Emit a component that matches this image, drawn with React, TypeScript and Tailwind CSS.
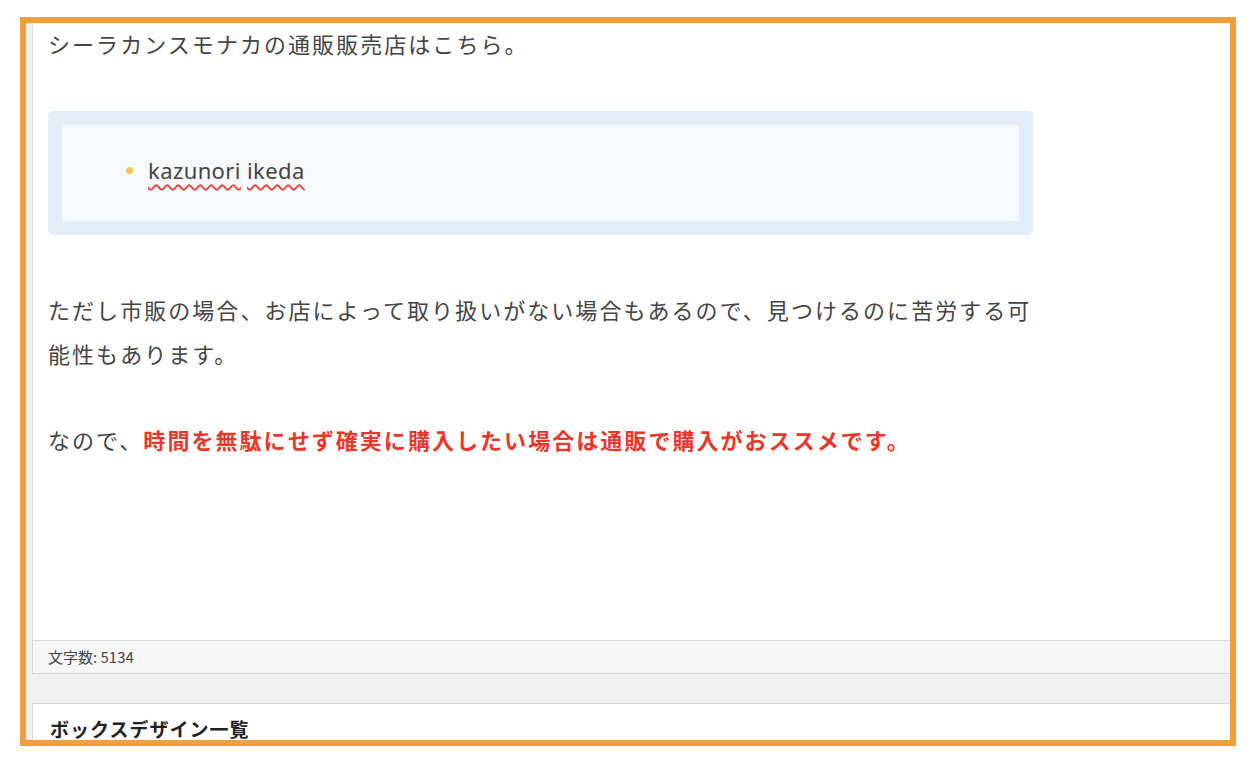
import React from "react";

const jp = "font-['Noto_Sans_CJK_JP','Noto_Sans',sans-serif]";

const App: React.FC = () => {
  return (
    <div className={`w-[1258px] h-[766px] bg-white pt-[17px] pl-[20px] ${jp}`}>
      <div className="w-[1216px] h-[729px] border-[6px] border-[#ef9f3c] bg-[#f1f1f1] pl-[6px] flex flex-col overflow-hidden">
        {/* editor area */}
        <div className="h-[617px] bg-white border-l border-[#dcdcdc] pl-[15px] shrink-0">
          <div className="w-[990px] text-[22px] tracking-[2.05px] leading-[44px] text-[#444]">
            <p className="-mt-[2px]">シーラカンスモナカの通販販売店はこちら。</p>

            <div className="mt-[46px] h-[124px] rounded-[5px] bg-[#e1eef8] p-[14px] w-[985px]">
              <div className="h-full bg-[#f6fafe] flex items-center pl-[64px] pb-[6px]">
                <span className="w-[7px] h-[7px] rounded-full bg-[#f3c74e] mr-[15px]" />
                <span className="font-['Noto_Sans',sans-serif] text-[22px] tracking-[0.4px] text-[#444]">
                  <span className="underline decoration-wavy decoration-[#e0443c] decoration-[1.5px] underline-offset-[5px]">kazunori</span>{" "}
                  <span className="underline decoration-wavy decoration-[#e0443c] decoration-[1.5px] underline-offset-[5px]">ikeda</span>
                </span>
              </div>
            </div>

            <p className="mt-[52px]">
              ただし市販の場合、お店によって取り扱いがない場合もあるので、見つけるのに苦労する可能性もあります。
            </p>

            <p className="mt-[42px]">
              なので、
              <strong className="font-bold text-[#e8372c]">
                時間を無駄にせず確実に購入したい場合は通販で購入がおススメです。
              </strong>
            </p>
          </div>
        </div>

        {/* status bar */}
        <div className="h-[34px] shrink-0 bg-[#f6f6f6] border border-[#d6d6d6] border-r-0 flex items-center pl-[15px] text-[15px] text-[#444]">
          文字数: 5134
        </div>

        <div className="h-[29px] shrink-0 bg-[#f0f0f0]" />

        {/* meta box */}
        <div className="flex-1 bg-white border-t border-l border-[#d6d6d6] pl-[17px] pt-[10px]">
          <h2 className="text-[19px] font-bold text-[#222] tracking-[1px] leading-[30px]">
            ボックスデザイン一覧
          </h2>
        </div>
      </div>
    </div>
  );
};

export default App;
